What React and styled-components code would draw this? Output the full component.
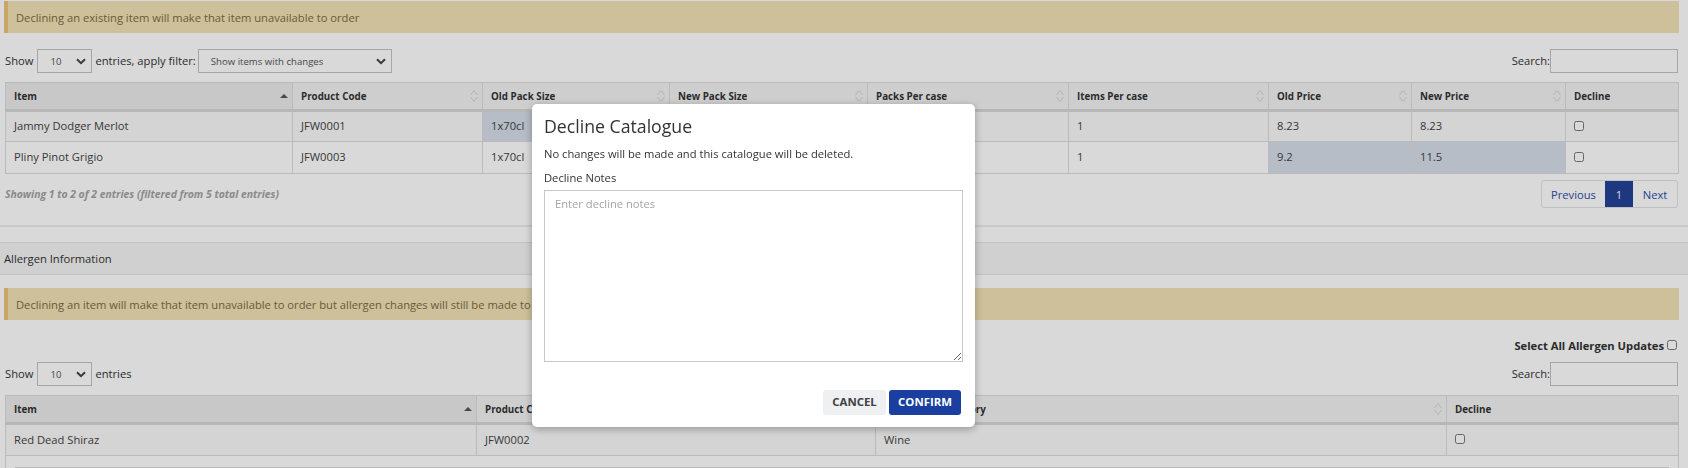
import styled, { createGlobalStyle } from "styled-components";

const GlobalStyle = createGlobalStyle`
  html, body {
    margin: 0;
    height: 468px;
    overflow: hidden;
    background: #fff;
    font-family: "Open Sans", "Liberation Sans", sans-serif;
    font-size: 11.2px;
    color: #333;
  }
`;

const chevron = encodeURIComponent(
  '<svg xmlns="http://www.w3.org/2000/svg" width="10" height="7" viewBox="0 0 10 7"><path d="M1 1.2 L5 5.2 L9 1.2" fill="none" stroke="#444" stroke-width="2"/></svg>'
);

const Page = styled.div`
  width: 1688px;
  height: 468px;
  overflow: hidden;
  padding-top: 1px;
  box-sizing: border-box;
`;

const Alert = styled.div`
  box-sizing: border-box;
  height: 32px;
  margin: ${(p) => (p.$second ? "13px 9px 0 4px" : "0 9px 0 4px")};
  padding-left: 8px;
  display: flex;
  align-items: center;
  background: #f1e2b6;
  border-left: 4px solid #ecc578;
  color: #7d6c43;
`;

const Toolbar = styled.div`
  display: flex;
  align-items: center;
  justify-content: space-between;
  height: 24px;
  margin: ${(p) => p.$margin || "16px 0 0"};
  padding: 0 10px 0 5px;
`;

const Group = styled.label`
  display: flex;
  align-items: center;
  gap: ${(p) => (p.$tight ? 0 : 3)}px;
`;

const Caption = styled.span`
  padding-bottom: 2px;
`;

const Select = styled.select`
  box-sizing: border-box;
  appearance: none;
  width: ${(p) => p.$width}px;
  height: 24px;
  margin-left: ${(p) => p.$shift || 0}px;
  padding: 0 0 0 12px;
  background: #fff url("data:image/svg+xml,${chevron}") no-repeat right 5px center;
  border: 1px solid #c4c4c4;
  border-radius: 0;
  font-family: inherit;
  font-size: 9.6px;
  color: #555;
`;

const SearchInput = styled.input`
  box-sizing: border-box;
  width: 128px;
  height: 24px;
  background: #fff;
  border: 1px solid #c4c4c4;
`;

const Table = styled.table`
  box-sizing: border-box;
  width: 1673px;
  margin: 9px 0 0 5px;
  table-layout: fixed;
  border-collapse: collapse;
  border: 1px solid #d2d2d2;
`;

const Col = styled.col`
  width: ${(p) => p.$w}px;
`;

const HeadCell = styled.th`
  position: relative;
  height: 28px;
  padding: 0 8px;
  box-sizing: border-box;
  text-align: left;
  font-size: 9.8px;
  font-weight: 700;
  color: #333;
  background: ${(p) => (p.$sorted ? "#ebebeb" : "#f3f3f3")};
  border: 1px solid #dcdcdc;
  border-bottom: 3px solid #d8d8d8;
`;

const SortIcon = styled.svg`
  position: absolute;
  right: 3px;
  top: 6px;
`;

const Cell = styled.td`
  box-sizing: border-box;
  height: ${(p) => p.$h || 31}px;
  padding: 0 8px 2px;
  color: #444;
  background: ${(p) => (p.$changed ? "#d6dee9" : p.$odd ? "#f9f9f9" : "#fff")};
  border: 1px solid #dcdcdc;
`;

const Check = styled.input.attrs({ type: "checkbox" })`
  display: block;
  width: 10px;
  height: 10px;
  margin: 0;
`;

const InlineCheck = styled(Check)`
  margin-left: 3px;
`;

const TableFooter = styled.div`
  display: flex;
  align-items: center;
  justify-content: space-between;
  height: 28px;
  margin-top: 6px;
  padding: 0 10px 0 5px;
`;

const Info = styled.div`
  font-size: 10.4px;
  font-weight: 700;
  font-style: italic;
  color: #a3a3a3;
`;

const Pager = styled.div`
  display: flex;
  height: 28px;
  box-sizing: border-box;
  border: 1px solid #e2e2e2;
  border-radius: 3px;
`;

const PageLink = styled.a`
  display: flex;
  align-items: center;
  justify-content: center;
  width: ${(p) => p.$w}px;
  color: ${(p) => (p.$active ? "#fff" : "#2c4ea6")};
  background: ${(p) => (p.$active ? "#234297" : "transparent")};
`;

const Rule = styled.div`
  height: 2px;
  margin-top: 17px;
  background: #ececec;
`;

const PanelHeading = styled.div`
  box-sizing: border-box;
  height: 33px;
  margin-top: 15px;
  padding-left: 4px;
  display: flex;
  align-items: center;
  background: #f5f5f5;
  border-top: 1px solid #e4e4e4;
  border-bottom: 1px solid #e4e4e4;
`;

const SelectAll = styled.div`
  display: flex;
  justify-content: flex-end;
  align-items: center;
  height: 18px;
  margin-top: 16px;
  padding-right: 11px;
  font-weight: 700;
`;

const DetailLine = styled.div`
  height: 1px;
  margin-top: 11px;
  background: #dcdcdc;
`;

const DetailCell = styled.td`
  padding: 0 9px;
  vertical-align: top;
  height: 40px;
  border: 1px solid #dcdcdc;
`;

const Overlay = styled.div`
  position: fixed;
  inset: 0;
  background: rgba(0, 0, 0, 0.15);
`;

const Modal = styled.div`
  position: fixed;
  left: 532px;
  top: 104px;
  box-sizing: border-box;
  width: 443px;
  height: 323px;
  padding: 8px 12px 12px;
  display: flex;
  flex-direction: column;
  background: #fff;
  border-radius: 5px;
  box-shadow: 0 2px 8px rgba(0, 0, 0, 0.3);
`;

const ModalTitle = styled.h2`
  margin: 0;
  font-size: 17.7px;
  line-height: 28px;
  font-weight: 400;
  color: #333;
`;

const ModalText = styled.p`
  margin: 6px 0 0;
  line-height: 16px;
  color: #333;
`;

const NotesLabel = styled.label`
  display: block;
  margin-top: 8px;
  line-height: 16px;
  color: #333;
`;

const Notes = styled.textarea`
  box-sizing: border-box;
  display: block;
  width: 419px;
  height: 172px;
  margin-top: 4px;
  padding: 5px 10px;
  border: 1px solid #c8c8c8;
  border-radius: 0;
  font-family: inherit;
  font-size: 11.2px;
  &::placeholder {
    color: #a5a5a5;
  }
`;

const ModalActions = styled.div`
  display: flex;
  justify-content: flex-end;
  gap: 3px;
  margin-top: 28px;
  padding-right: 2px;
`;

const Button = styled.button`
  box-sizing: border-box;
  height: 25px;
  width: ${(p) => p.$w}px;
  padding: 0 0 2px;
  border: 0;
  border-radius: 3px;
  font-family: inherit;
  font-size: 11.4px;
  font-weight: 700;
  color: ${(p) => (p.$primary ? "#fff" : "#3d4146")};
  background: ${(p) => (p.$primary ? "#1b3fa0" : "#eef0f2")};
`;

function SortMark({ sorted }) {
  if (sorted) {
    return (
      <SortIcon width="10" height="14" viewBox="0 0 10 14">
        <path d="M1 9 L5 5 L9 9 Z" fill="#555" />
      </SortIcon>
    );
  }
  return (
    <SortIcon width="10" height="14" viewBox="0 0 10 14">
      <path d="M1.5 6 L5 1.5 L8.5 6 M1.5 8 L5 12.5 L8.5 8" fill="none" stroke="#d4d4d4" strokeWidth="1" />
    </SortIcon>
  );
}

const mainCols = [287, 190, 187, 198, 201, 200, 143, 154, 113];
const mainHeads = ["Item", "Product Code", "Old Pack Size", "New Pack Size", "Packs Per case", "Items Per case", "Old Price", "New Price", "Decline"];
// cells hidden behind the modal stay empty
const mainRows = [
  { cells: ["Jammy Dodger Merlot", "JFW0001", "1x70cl", "", "", "1", "8.23", "8.23"], changed: [2, 3] },
  { cells: ["Pliny Pinot Grigio", "JFW0003", "1x70cl", "", "", "1", "9.2", "11.5"], changed: [6, 7] },
];

const allergenCols = [471, 399, 571, 232];
const allergenHeads = ["Item", "Product Code", "Product Subcategory", "Decline"];

export default function App() {
  return (
    <>
      <GlobalStyle />
      <Page>
        <Alert>Declining an existing item will make that item unavailable to order</Alert>
        <Toolbar>
          <Group>
            <Caption>Show</Caption>
            <Select $width={55} $shift={1} defaultValue="10">
              <option>10</option>
            </Select>
            <Caption>entries, apply filter:</Caption>
            <Select $width={194} $shift={-1} defaultValue="changes">
              <option value="changes">Show items with changes</option>
            </Select>
          </Group>
          <Group $tight>
            <Caption>Search:</Caption>
            <SearchInput />
          </Group>
        </Toolbar>
        <Table>
          <colgroup>
            {mainCols.map((w, i) => <Col key={i} $w={w} />)}
          </colgroup>
          <thead>
            <tr>
              {mainHeads.map((h, i) => (
                <HeadCell key={h} $sorted={i === 0}>
                  {h}
                  {h !== "Decline" && <SortMark sorted={i === 0} />}
                </HeadCell>
              ))}
            </tr>
          </thead>
          <tbody>
            {mainRows.map((row, r) => (
              <tr key={row.cells[0]}>
                {row.cells.map((c, i) => (
                  <Cell key={i} $odd={r === 0} $changed={row.changed.includes(i)} $h={r === 0 ? 31 : 32}>{c}</Cell>
                ))}
                <Cell $odd={r === 0}><Check /></Cell>
              </tr>
            ))}
          </tbody>
        </Table>
        <TableFooter>
          <Info>Showing 1 to 2 of 2 entries (filtered from 5 total entries)</Info>
          <Pager>
            <PageLink $w={63}>Previous</PageLink>
            <PageLink $w={28} $active>1</PageLink>
            <PageLink $w={44}>Next</PageLink>
          </Pager>
        </TableFooter>
        <Rule />
        <PanelHeading>Allergen Information</PanelHeading>
        <Alert $second>Declining an item will make that item unavailable to order but allergen changes will still be made to</Alert>
        <SelectAll>
          Select All Allergen Updates
          <InlineCheck />
        </SelectAll>
        <Toolbar $margin="8px 0 0">
          <Group>
            <Caption>Show</Caption>
            <Select $width={55} $shift={1} defaultValue="10">
              <option>10</option>
            </Select>
            <Caption>entries</Caption>
          </Group>
          <Group $tight>
            <Caption>Search:</Caption>
            <SearchInput />
          </Group>
        </Toolbar>
        <Table>
          <colgroup>
            {allergenCols.map((w, i) => <Col key={i} $w={w} />)}
          </colgroup>
          <thead>
            <tr>
              {allergenHeads.map((h, i) => (
                <HeadCell key={h} $sorted={i === 0}>
                  {h}
                  {h !== "Decline" && <SortMark sorted={i === 0} />}
                </HeadCell>
              ))}
            </tr>
          </thead>
          <tbody>
            <tr>
              <Cell $odd $h={32}>Red Dead Shiraz</Cell>
              <Cell $odd $h={32}>JFW0002</Cell>
              <Cell $odd $h={32}>Wine</Cell>
              <Cell $odd $h={32}><Check /></Cell>
            </tr>
            <tr>
              <DetailCell colSpan={4}><DetailLine /></DetailCell>
            </tr>
          </tbody>
        </Table>
      </Page>
      <Overlay />
      <Modal>
        <ModalTitle>Decline Catalogue</ModalTitle>
        <ModalText>No changes will be made and this catalogue will be deleted.</ModalText>
        <NotesLabel>Decline Notes</NotesLabel>
        <Notes placeholder="Enter decline notes" />
        <ModalActions>
          <Button $w={63}>CANCEL</Button>
          <Button $w={72} $primary>CONFIRM</Button>
        </ModalActions>
      </Modal>
    </>
  );
}
